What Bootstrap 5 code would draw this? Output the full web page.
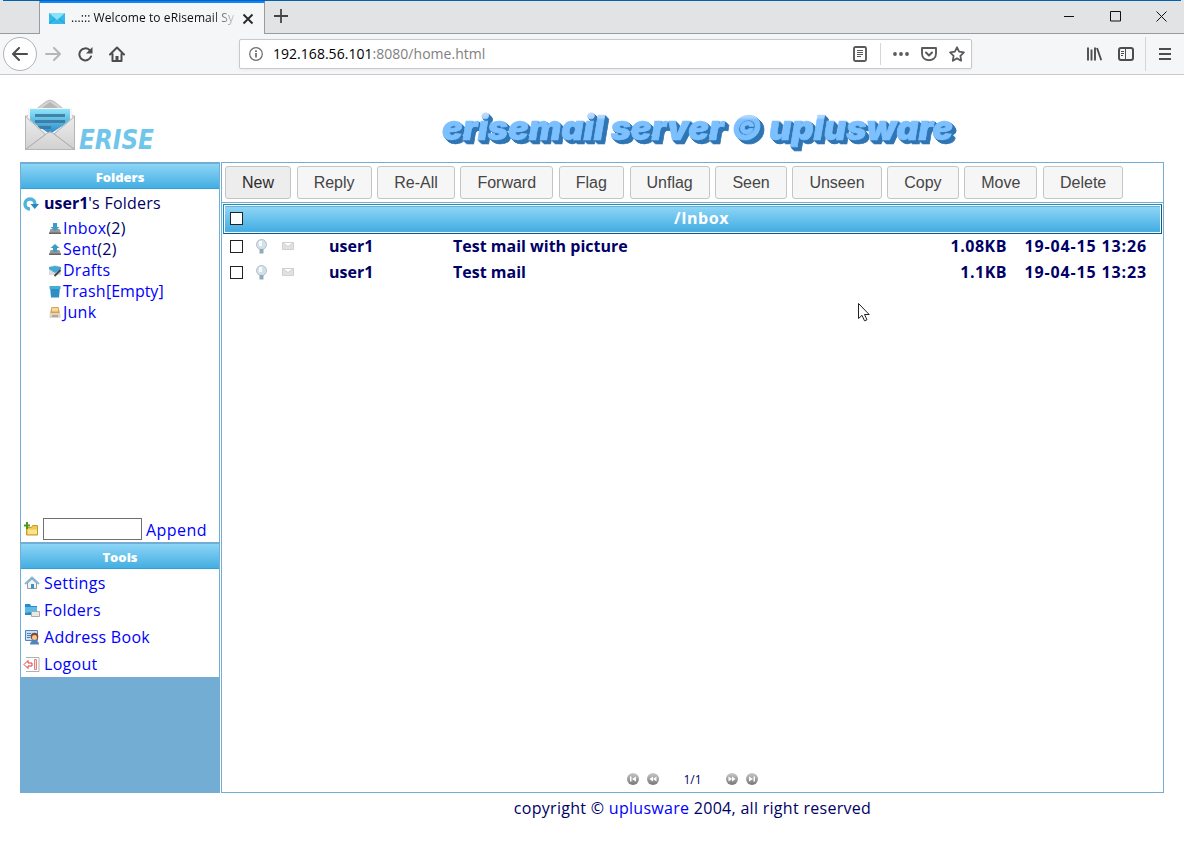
<!DOCTYPE html>
<html lang="en">
<head>
<meta charset="utf-8">
<title>...::: Welcome to eRisemail System</title>
<link href="https://cdn.jsdelivr.net/npm/bootstrap@5.3.0/dist/css/bootstrap.min.css" rel="stylesheet">
<style>
:root{--edge:#74add3}
body{font-family:"Open Sans","Noto Sans",sans-serif;font-size:16px;line-height:21px;color:#000066;background:#fff;height:866px;overflow:hidden}
a{color:#0000ff;text-decoration:none}
svg{display:block;flex:none}
.tabstrip{height:34px;background:#e2e3e5;border-bottom:1px solid #999a9e}
.topline{height:1px;background:#0063b1;margin:0 3px;position:absolute;top:0;left:0;right:0}
.tabstub{width:40px;border-right:1px solid #9a9b9e}
.browsertab{width:225px;height:33px;margin-bottom:-1px;margin-top:1px;border-top:2px solid #0a84ff;border-right:1px solid #9a9b9e;background:#f5f6f7;padding-left:9px;font-size:12px;color:#111}
.tabname{width:171px;margin-left:6px;letter-spacing:.08px;padding-bottom:2px;-webkit-mask-image:linear-gradient(90deg,#000 140px,transparent 168px)}
.toolbar-ff{height:41px;background:#f5f6f7;border-bottom:1px solid #c9c9cb}
.backbtn{width:34px;height:34px;border:1px solid #b2b2b4;border-radius:50%;background:#fff}
.urlbar{width:733px;height:30px;margin-left:114px;background:#fff;border:1px solid #c9c9cb;border-radius:2px;font-size:14px;color:#000;box-shadow:0 1px 3px rgba(0,0,0,.06)}
.urlbar .addr{padding-bottom:2px;letter-spacing:.03px}
.urlbar i{font-style:normal;color:#808080}
.vline{width:1px;background:#d5d5d7}
.masthead{height:87px;padding:24px 0 0 24px}
.extrude{filter:drop-shadow(1px 1px 0 #2f75b3) drop-shadow(1px 1px 0 #2f75b3) drop-shadow(2px 2px 0 #2f75b3);overflow:visible}
.side{width:200px;border:1px solid var(--edge);border-top:0;background:#fff}
.bar-h{height:27px;border-top:2px solid var(--edge);border-bottom:1px solid #2fa0d8;background:linear-gradient(#8dd5f6,#44aee2);color:#fff;font-weight:800;font-size:13px;padding-top:2px}
.tree{height:353px;letter-spacing:.25px}
.tree b{letter-spacing:0}
.tree li{height:21px;padding-left:27px}
.tree li svg{margin-right:1px}
.pane{width:943px;border:1px solid var(--edge)}
.actions{height:40px;border-bottom:1px solid var(--edge);padding:3px 0 0 3px;gap:5.65px}
.actions .btn{font:16px/21px "Liberation Sans",Arial,sans-serif;color:#454545;background:#f6f6f6;border:1px solid #c5c5c5;border-radius:3px;padding:5px 16px;height:33px}
.actions .btn.hot{background:#ededed;color:#2b2b2b}
.frame{margin:1px 1px 0;height:30px;border:1px solid;border-color:#0a93c4 #005f95 #005f95 #0a93c4;padding:1px}
.frame>div{height:26px;border-top:1px solid var(--edge);background:linear-gradient(#8dd5f6,#44aee2);color:#fff;font-weight:700;border-bottom:1px solid #55aedb;padding-bottom:1px}
.ls-head{letter-spacing:.55px}
.tick{appearance:none;width:13px;height:13px;border:1px solid #222;background:#fff;margin:0;flex:none;border-radius:0}
.mail{height:26px;font-weight:700;padding:0 0 2px 8px}
.mail .from{width:124px}.mail .size{width:90px;letter-spacing:.5px}.mail .date{width:156px;padding-right:16px;letter-spacing:.85px}
.newname{width:99px;height:22px;border:1px solid #707070}
.tools a{height:27px;letter-spacing:.28px;padding-top:1px}
.tools{background:#fff}
.pager{font-size:12px;height:26px}
.ls-foot{letter-spacing:.29px}
.cursor-arrow{position:absolute;left:857px;top:302px}
</style>
</head>
<body>
<header>
<div class="tabstrip d-flex position-relative">
<div class="topline"></div>
<div class="tabstub"></div>
<div class="browsertab d-flex align-items-center">
<svg width="16" height="11" viewBox="0 0 16 11"><path fill="#36b8ea" d="M0 0h16v11H0z"/><path fill="#8be3fa" d="M0 0h16L8 7z"/><path stroke="#1e9fd4" fill="none" d="M0 10.500l6-5M16 10.500l-6-5"/></svg>
<div class="tabname text-nowrap">...::: Welcome to eRisemail Sy</div>
<svg width="12" height="12" viewBox="0 0 12 12"><path stroke="#2a2a2c" stroke-width="1.900" d="M1.500 1.500l9 9m0-9l-9 9"/></svg>
</div>
<svg class="mt-2 ms-2" width="16" height="16" viewBox="0 0 16 16"><path stroke="#444" stroke-width="1.800" d="M8 1v14M1 8h14"/></svg>
<div class="ms-auto d-flex align-items-center">
<svg width="10" height="10"><path stroke="#111" d="M0 4.500h10"/></svg>
<svg width="11" height="11" style="margin-left:36px"><path fill="none" stroke="#111" d="M1 .5h9.500v9.500H.5V.5z"/></svg>
<svg width="11" height="11" style="margin-left:35px;margin-right:17px"><path stroke="#111" d="M.5.500l10 10m0-10l-10 10"/></svg>
</div>
</div>
<div class="toolbar-ff d-flex align-items-center">
<div class="backbtn d-flex align-items-center justify-content-center" style="margin-left:3px"><svg width="16" height="14" viewBox="0 0 16 14"><path fill="none" stroke="#4d4d50" stroke-width="2" stroke-linecap="round" stroke-linejoin="round" d="M15 7H1.500M7 1L1 7l6 6"/></svg></div>
<svg style="margin-left:8px" width="16" height="14" viewBox="0 0 16 14"><path fill="none" stroke="#b5b6b8" stroke-width="2" stroke-linecap="round" stroke-linejoin="round" d="M1 7h13.500M9 1l6 6-6 6"/></svg>
<svg style="margin-left:16px" width="16" height="16" viewBox="0 0 16 16"><path fill="none" stroke="#4d4d50" stroke-width="2" stroke-linecap="round" d="M14 10.500A6 6 0 1 1 12.500 4"/><path fill="#4d4d50" d="M15.500 1v6.500H9z"/></svg>
<svg style="margin-left:16px" width="16" height="16" viewBox="0 0 16 16"><path fill="none" stroke="#4d4d50" stroke-width="2" stroke-linejoin="round" stroke-linecap="round" d="M1 8.500L8 1.500l7 7M3.500 8v7h9V8"/><path fill="#4d4d50" d="M6.500 10h3v5h-3z"/></svg>
<div class="urlbar d-flex align-items-center">
<svg style="margin-left:9px" width="14" height="14" viewBox="0 0 14 14"><circle cx="7" cy="7" r="6.300" fill="none" stroke="#6b6b6e" stroke-width="1.200"/><path stroke="#6b6b6e" stroke-width="1.700" d="M7 6v4.500M7 3.300V5"/></svg>
<span class="addr" style="margin-left:10px">192.168.56.101<i>:8080/home.html</i></span>
<svg class="ms-auto" width="14" height="16" viewBox="0 0 14 16"><rect x="1" y="1" width="12" height="14" rx="1.500" fill="none" stroke="#5a5a5d" stroke-width="1.900"/><path stroke="#5a5a5d" d="M4 4.500h6M4 6.500h6M4 8.500h6M4 10.500h4"/></svg>
<div class="vline" style="height:22px;margin:0 12px 0 13px"></div>
<svg width="16" height="4" viewBox="0 0 16 4"><g fill="#5a5a5d"><circle cx="2" cy="2" r="1.900"/><circle cx="8" cy="2" r="1.900"/><circle cx="14" cy="2" r="1.900"/></g></svg>
<svg style="margin-left:12px" width="16" height="14" viewBox="0 0 16 14"><path fill="none" stroke="#5a5a5d" stroke-width="1.900" stroke-linejoin="round" d="M1 1h14v5.500C15 15.300 1 15.300 1 6.500z"/><path fill="none" stroke="#5a5a5d" stroke-width="2" stroke-linecap="round" stroke-linejoin="round" d="M5 5.500l3 3 3-3"/></svg>
<svg style="margin:0 6px 0 12px" width="16" height="16" viewBox="0 0 16 16"><path fill="none" stroke="#5a5a5d" stroke-width="1.800" stroke-linejoin="round" d="M8 1.300l2.100 4.400 4.800.7-3.500 3.400.8 4.900L8 12.400l-4.200 2.300.8-4.900L1.100 6.400l4.800-.7z"/></svg>
</div>
<svg style="margin-left:115px" width="15" height="14" viewBox="0 0 15 14"><path stroke="#4d4d50" stroke-width="1.900" d="M1 .5v13M4.500 2.500v11M8 .5v13M10 1l4.300 12.300"/></svg>
<svg style="margin-left:16px" width="16" height="14" viewBox="0 0 16 14"><rect x="1" y="1" width="14" height="12" rx="2" fill="none" stroke="#4d4d50" stroke-width="2"/><path stroke="#4d4d50" d="M7.500 1v12M3 4.500h3M3 6.500h3M3 8.500h2"/></svg>
<div class="vline" style="height:34px;margin:0 13px 0 11px"></div>
<svg width="12" height="12" viewBox="0 0 12 12"><path stroke="#4d4d50" stroke-width="2" d="M0 1h12M0 6h12M0 11h12"/></svg>
</div>
</header>

<div class="masthead d-flex align-items-start">
<svg width="52" height="53" viewBox="0 0 52 53">
<defs><linearGradient id="blu" x2="0" y2="1"><stop stop-color="#8fe6fa"/><stop offset="1" stop-color="#2686c9"/></linearGradient><linearGradient id="gry" x2="0" y2="1"><stop stop-color="#ececec"/><stop offset="1" stop-color="#d2d2d2"/></linearGradient>
<linearGradient id="sky" gradientUnits="userSpaceOnUse" x1="0" y1="8" x2="0" y2="36"><stop stop-color="#c4ddff"/><stop offset=".2" stop-color="#a9d3ff"/><stop offset=".28" stop-color="#7cc0ff"/><stop offset="1" stop-color="#7cc0ff"/></linearGradient></defs>
<path fill="#d3d3d3" stroke="#bdbdbd" d="M2 18L22 2.500q4-3 8 0l20 15.500z"/><path fill="#aaa" d="M18 9l8-6 8 6z" opacity=".7"/>
<rect x="1.500" y="17" width="49" height="33.500" fill="#e6e6e6" stroke="#b5b5b5"/>
<path fill="#f5f5f5" d="M4 9h44v13L26 37 4 22z"/>
<path fill="url(#blu)" d="M6 10h40v12L26 35 6 22z"/><path fill="#37779c" opacity=".85" d="M11 15h30v3H11zM11 21h30v3H11zM14 27h13v3H14z"/>
<path fill="url(#gry)" d="M2 50l24-17 24 17zM2 17l20 18L2 50zM50 17L30 35l20 15z"/><path fill="none" stroke="#b2b2b2" d="M1.500 17.500l20 18L2 50l20-15 4-2.500 4 2.500 20 15-20-15 20.500-17.500"/></svg>
<svg style="margin:18px 0 0 3px" width="80" height="40"><text x="0" y="32" textLength="75" lengthAdjust="spacingAndGlyphs" font-family="DejaVu Sans" font-weight="bold" font-style="italic" font-size="26" fill="#70c6ea">ERISE</text></svg>
<svg class="extrude" style="margin-left:274px;margin-top:5px" width="540" height="48"><text x="9" y="36" textLength="511" lengthAdjust="spacingAndGlyphs" font-family="Inter,Liberation Sans" font-weight="900" font-style="italic" font-size="34.500" fill="url(#sky)" stroke="url(#sky)" stroke-width=".7">erisemail server © uplusware</text></svg>
</div>

<main class="d-flex" style="margin-left:20px;height:631px">
<aside class="side d-flex flex-column" style="background:#74add3">
<div class="bar-h d-flex align-items-center justify-content-center">Folders</div>
<div class="tree bg-white d-flex flex-column">
<div class="d-flex align-items-center" style="height:29px;padding-left:2px"><svg width="16" height="14" viewBox="0 0 16 14"><path fill="none" stroke="#4db3dd" stroke-width="3.400" d="M7 12A5 5 0 1 1 12 7"/><path fill="#2788bd" d="M7.500 7H16l-4.200 5z"/></svg><span style="margin-left:5px"><b>user1</b>'s Folders</span></div>
<ul class="list-unstyled m-0">
<li class="d-flex align-items-center"><svg width="14" height="13" viewBox="0 0 14 13"><path fill="#999" d="M2.500 7h9l1.500 5H1z"/><path fill="#666" d="M1 10.500h12V12H1z"/><path fill="#3b9cca" d="M5 1h4v4h2.500L7 9 2.500 5H5z"/></svg><span><a href="#">Inbox</a>(2)</span></li>
<li class="d-flex align-items-center"><svg width="14" height="13" viewBox="0 0 14 13"><path fill="#999" d="M2.500 7h9l1.500 5H1z"/><path fill="#666" d="M1 10.500h12V12H1z"/><path fill="#3b9cca" d="M7 1l4.500 4H9v4H5V5H2.500z"/></svg><span><a href="#">Sent</a>(2)</span></li>
<li class="d-flex align-items-center"><svg width="14" height="13" viewBox="0 0 14 13"><path fill="#ddd" d="M1 3l6-2 6 2v8H1z"/><path fill="#42a9d5" d="M1 3l6-1 6 1v2L7 9 1 5z"/><path stroke="#444" stroke-width="2" d="M12.500 6l-6 6"/></svg><a href="#">Drafts</a></li>
<li class="d-flex align-items-center"><svg width="14" height="13" viewBox="0 0 14 13"><path fill="#2c8fc4" d="M2 2h10l-1 10.500H3z"/><path fill="#47acd7" d="M1.500 1h11v3h-11z"/></svg><span><a href="#">Trash</a><a href="#" style="letter-spacing:0">[Empty]</a></span></li>
<li class="d-flex align-items-center"><svg width="14" height="13" viewBox="0 0 14 13"><path fill="#d8a24e" d="M3.500 1h7L12 7.500H2z"/><path fill="#f4d7a1" d="M4 2h6v3.500H4z"/><path fill="#ddd6cd" d="M1.500 7.500h11V12h-11z"/><path stroke="#8b7866" d="M4 10h6"/></svg><a href="#">Junk</a></li>
</ul>
<div class="mt-auto d-flex align-items-center" style="height:26px;padding-left:3px"><svg width="15" height="15" viewBox="0 0 15 15"><path fill="#f2c94f" stroke="#c79b2b" d="M2.500 5.500h5l1-2h5v9.500h-11z"/><path fill="#f9e48c" d="M4 7.500h9v4.500H4z"/><path stroke="#4a9a1c" stroke-width="2" d="M3 0v7M0 3.500h6"/></svg><input class="newname" style="margin-left:4px" aria-label="Folder"><a href="#" style="margin-left:4px;padding-top:2px;letter-spacing:.45px">Append</a></div>
</div>
<div class="bar-h d-flex align-items-center justify-content-center">Tools</div>
<nav class="tools d-flex flex-column">
<a href="#" class="d-flex align-items-center"><svg style="margin:0 4px 0 3px" width="16" height="14" viewBox="0 0 16 14"><path fill="#f2f2f2" stroke="#999" d="M3.500 7v5.500h9V7L8 3z"/><path fill="none" stroke="#7bb8d8" stroke-width="1.800" d="M1 8l7-6.500L15 8"/><path fill="#3e93c4" d="M7 8h3v4.500H7z"/></svg>Settings</a>
<a href="#" class="d-flex align-items-center"><svg style="margin:0 4px 0 3px" width="16" height="14" viewBox="0 0 16 14"><path fill="#238dca" d="M1 1h5l1 2h6v9H1z"/><path fill="#5bbbe5" d="M1 4h12v4L1 10z"/><path fill="#e8e8e8" stroke="#aaa" d="M7.500 8.500h8v5h-8z"/></svg>Folders</a>
<a href="#" class="d-flex align-items-center"><svg style="margin:0 4px 0 3px" width="16" height="16" viewBox="0 0 16 16"><path fill="#c9dff5" stroke="#4e84c2" d="M1.500 1.500h12v10h-12z"/><path stroke="#4e84c2" d="M3 4.500h4M3 6.500h4M3 8.500h3"/><circle cx="10.500" cy="7.500" r="3.800" fill="#8c4a22"/><circle cx="10.500" cy="8.500" r="2.500" fill="#f2c49c"/><path fill="#5585b8" d="M6 15.500q0-4 4.500-4t4.500 4z"/></svg>Address Book</a>
<a href="#" class="d-flex align-items-center"><svg style="margin:0 4px 0 2px" width="17" height="17" viewBox="0 0 17 17"><path fill="none" stroke="#a9b4b8" d="M3 1.500h13v14H3"/><path fill="#fbdada" stroke="#e88080" d="M11.500 3.500h2v10h-2z"/><path fill="#fff" stroke="#e23b3b" d="M1 8.500l4-4V7h4v3H5v2.500z"/></svg>Logout</a>
</nav>
</aside>

<section class="pane d-flex flex-column" style="margin-left:1px">
<div class="actions d-flex">
<button class="btn hot">New</button><button class="btn">Reply</button><button class="btn">Re-All</button><button class="btn">Forward</button><button class="btn">Flag</button><button class="btn">Unflag</button><button class="btn">Seen</button><button class="btn">Unseen</button><button class="btn">Copy</button><button class="btn">Move</button><button class="btn">Delete</button>
</div>
<div class="frame"><div class="d-flex align-items-center"><input type="checkbox" class="tick" style="margin-left:5px"><span class="flex-fill text-center ls-head">/Inbox</span></div></div>
<div class="mail d-flex align-items-center"><input type="checkbox" class="tick"><svg style="margin-left:12px" width="13" height="15" viewBox="0 0 13 15"><circle cx="6.500" cy="5.500" r="5" fill="#d5e1e8" stroke="#b3c1ca"/><path fill="#f8fbfd" d="M4 2h3v5H4z"/><path fill="#8faab8" d="M4.500 10h4v4.500h-4z"/></svg><svg style="margin-left:14px" width="12" height="8" viewBox="0 0 12 8"><path fill="#e1e1e1" stroke="#d0d0d0" d="M.5.500h11v7H.5zl5.500 4 5.500-4"/></svg><span class="from" style="margin-left:35px">user1</span><span class="flex-fill">Test mail with picture</span><span class="size text-end">1.08KB</span><span class="date text-end">19-04-15 13:26</span></div>
<div class="mail d-flex align-items-center"><input type="checkbox" class="tick"><svg style="margin-left:12px" width="13" height="15" viewBox="0 0 13 15"><circle cx="6.500" cy="5.500" r="5" fill="#d5e1e8" stroke="#b3c1ca"/><path fill="#f8fbfd" d="M4 2h3v5H4z"/><path fill="#8faab8" d="M4.500 10h4v4.500h-4z"/></svg><svg style="margin-left:14px" width="12" height="8" viewBox="0 0 12 8"><path fill="#e1e1e1" stroke="#d0d0d0" d="M.5.500h11v7H.5zl5.500 4 5.500-4"/></svg><span class="from" style="margin-left:35px">user1</span><span class="flex-fill">Test mail</span><span class="size text-end">1.1KB</span><span class="date text-end">19-04-15 13:23</span></div>
<svg width="0" height="0"><defs><linearGradient id="ball" x2="0" y2="1"><stop stop-color="#c8c8c8"/><stop offset="1" stop-color="#777"/></linearGradient></defs></svg>
<div class="pager mt-auto d-flex align-items-center justify-content-center">
<svg width="12" height="12" viewBox="0 0 12 12"><circle cx="6" cy="6" r="6" fill="url(#ball)"/><path fill="#fff" d="M3 3.500h1.500v5H3zM9 3.500v5L5 6z"/></svg>
<svg style="margin-left:8px" width="12" height="12" viewBox="0 0 12 12"><circle cx="6" cy="6" r="6" fill="url(#ball)"/><path fill="#fff" d="M6 3.500v5L2.500 6zM9.500 3.500v5L6 6z"/></svg>
<span class="text-center" style="width:67px">1/1</span>
<svg width="12" height="12" viewBox="0 0 12 12"><circle cx="6" cy="6" r="6" fill="url(#ball)"/><path fill="#fff" d="M6 3.500v5L9.500 6zM2.500 3.500v5L6 6z"/></svg>
<svg style="margin-left:8px" width="12" height="12" viewBox="0 0 12 12"><circle cx="6" cy="6" r="6" fill="url(#ball)"/><path fill="#fff" d="M9 3.500H7.500v5H9zM3 3.500v5L7 6z"/></svg>
</div>
</section>
</main>
<footer class="text-center ls-foot" style="margin:5px 20px 0 221px;width:943px">copyright © <a href="#">uplusware</a> 2004, all right reserved</footer>
<svg class="cursor-arrow" width="14" height="20" viewBox="0 0 14 20"><path fill="#fff" stroke="#222" d="M1.500 1.500v15l3.500-3.200 2.500 5.500 2.500-1-2.500-5.300h4.700z"/></svg>
<script src="https://cdn.jsdelivr.net/npm/bootstrap@5.3.0/dist/js/bootstrap.bundle.min.js"></script>
</body>
</html>
